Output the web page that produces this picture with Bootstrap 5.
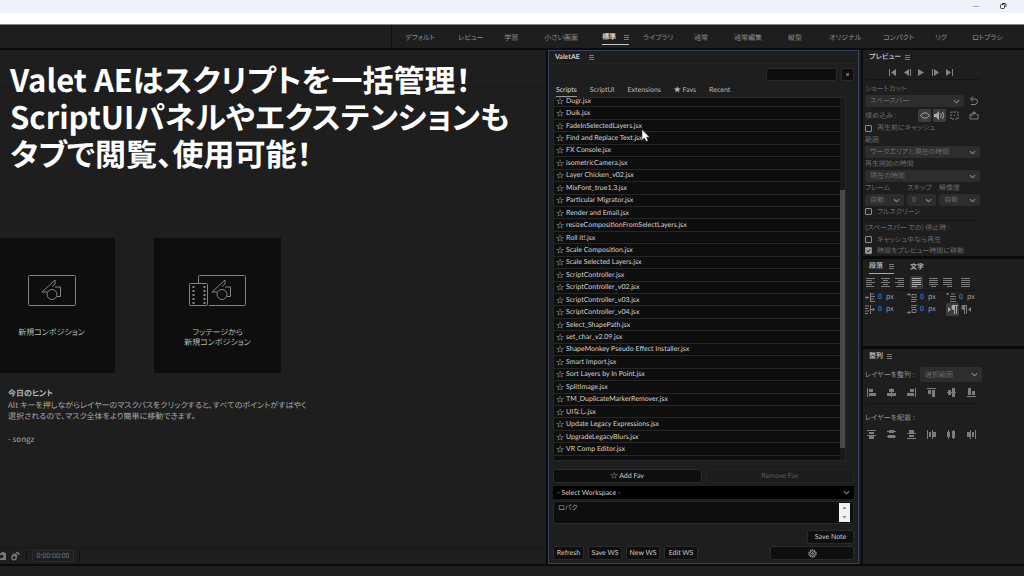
<!DOCTYPE html>
<html lang="ja">
<head>
<meta charset="utf-8">
<meta name="viewport" content="width=device-width, initial-scale=1">
<title>Valet AE</title>
<link href="https://cdn.jsdelivr.net/npm/bootstrap@5.3.0/dist/css/bootstrap.min.css" rel="stylesheet">
<style>
:root{--panel:#1e1e1e;--well:#0e0e0e;--edge:#0b0b0b;--dim:#6c6c6c;--soft:#a4a4a4}
body{font-family:"Noto Sans CJK JP",sans-serif;font-size:7px;line-height:12px;font-feature-settings:"palt","kern";text-rendering:geometricPrecision;background:var(--panel);color:var(--soft);overflow-x:hidden}
button,input,select,textarea{font-feature-settings:inherit;text-rendering:inherit}
svg{display:block;flex:none}
.titlebar{height:13px;background:#edf2fb}
.menubar{height:12px;background:#fff;border-bottom:1px solid #858585}
.ws-row{height:25px;border-bottom:2px solid var(--edge)}
.ws-lead{width:38.3%;border-right:1px solid #101010}
.ws-tabs{display:grid;grid-template-columns:53fr 46fr 40fr 58fr 41fr 51fr 40fr 54fr 41fr 54fr 52fr 37fr 52fr;padding:2px 0 0 13px}
.ws-tabs a{color:#8e8e8e;text-decoration:none;white-space:nowrap}
.ws-tabs .on{color:#d8d8d8;font-weight:700}
.ws-tabs .on span{display:inline-flex;width:27px;border-bottom:1px solid #c4c4c4;justify-content:space-between;align-items:center;height:15px}
.burger{width:5px;height:5px;border-top:1px solid #777;border-bottom:1px solid #777;position:relative;flex:none}
.burger::after{content:"";position:absolute;left:0;right:0;top:1px;height:1px;background:#777}
.viewer{border-right:2px solid var(--edge)}
.viewer-head{height:37px;border-bottom:1px solid #191919}
.starters{padding-top:151px;gap:39px}
.starter{width:127px;height:135px;background:var(--well);border:0;color:#b8b8b8;font-size:8px;line-height:10px;flex:none;padding:37px 0 0}
.starter:first-child{margin-left:-12px}
.starter svg{margin:0 auto 22px}
.tip{padding:15px 8px 0;font-size:8px;line-height:11px;color:#a6a6a6}
.tip h2{font-size:8px;line-height:12px;margin:0;font-weight:700;color:#b8b8b8}
.viewer-foot{height:17px;border-top:1px solid #181818;color:#777;gap:5px}
.timecode{width:42px;height:12px;border:1px solid #2c2c2c;border-radius:2px;line-height:10px;text-align:center}
.tick{width:1px;height:10px;background:#0e0e0e}
.caption{position:absolute;left:10px;top:60px;font-size:31px;line-height:37px;font-weight:700;color:#fff;margin:0;white-space:nowrap;z-index:3}
.valet{width:311px;border:1px solid #34405c;flex:none;color:#d2d2d2;font-family:Lato,"Noto Sans CJK JP",sans-serif}
.valet-head{height:13px;border-bottom:1px solid #242424;padding:0 6px;gap:9px}
.find{height:13px;background:var(--well);border:1px solid #292929;border-radius:2px;width:71px;color:#ccc;padding:0 3px}
.dark{background:#0f0f0f;border:1px solid #2a2a2a;border-radius:2px;color:#c8c8c8;padding:0;height:14px;line-height:12px}
.dark.off{background:#1d1d1d;border-color:#252525;color:#5c5c5c}
.find + .dark{width:13px;height:13px;line-height:10px}
.script-tabs{gap:13px;padding:3px 7px 0}
.script-tabs a{color:#b8b8b8;text-decoration:none;height:13px;border-bottom:1px solid transparent}
.script-tabs .on{color:#ddd;border-color:#999}
.script-box{height:364px;margin:0 12px 0 4px;border:1px solid #272727;overflow:hidden;display:flex}
.script-list{height:373px;margin:-3px 0 0;padding:0;display:flex;flex-direction:column;flex:1 1 auto;list-style:none;background:var(--well)}
.script-list li{flex:1 1 0;min-height:0;display:flex;align-items:center;padding-left:2px;gap:3px;border-bottom:1px solid #262626;line-height:10px}
.script-list i{font-style:normal;width:7px;font-size:8px}
.script-bar{width:5px;background:#191919}
.script-bar div{height:258px;margin-top:92px;background:#484848}
.pick{appearance:none;background:#2d2d2d url("data:image/svg+xml,%3Csvg xmlns='http://www.w3.org/2000/svg' viewBox='0 0 8 5'%3E%3Cpath d='M1 1l3 3 3-3' fill='none' stroke='%23858585' stroke-width='1.3'/%3E%3C/svg%3E") no-repeat right 4px center/7px 5px;border:0;border-radius:2px;color:var(--dim);height:12px;line-height:12px;padding:0 13px 0 5px;width:100%;display:block}
.pick.ws{background-color:#000;color:#d2d2d2;padding-left:4px;border-radius:0;height:13px;margin-top:3px}
.note-wrap{padding-top:2px}
.note{height:23px;background:var(--well);border:1px solid #292929;border-radius:2px;color:#999;resize:none;width:100%;padding:0 4px;display:block;overflow:hidden;line-height:12px}
.spin{position:absolute;right:4px;top:4px;width:11px;height:19px;background:#f1f1f1}
.save-row{padding-top:6px}
.foot-row{padding-top:2px}
.w-note{width:47px}.w-sm{width:31px}.w-md{width:34px}.w-gear{width:84px}
.side{width:163px;border-left:2px solid var(--edge);flex:none;color:var(--dim);margin-left:2px}
.side section{padding:0 2px;border-bottom:3px solid var(--edge)}
.side h2{font-size:7px;line-height:14px;margin:0;color:#b2b2b2;font-weight:700}
.transport{margin:3px 0 0}
.slim{max-width:115px}
.rule{border-top:1px solid #151515;height:1px;margin-bottom:3px}
.rule.mid{margin:3px 0 2px}
.rule.bare{margin:0}
.embed{gap:2px;margin-top:2px}
.chk{gap:5px;height:11px;white-space:nowrap}
.chk.first{height:12px}
.chk input{appearance:none;width:7px;height:7px;border:1px solid #8c8c8c;margin:0;border-radius:1px;flex:none}
.chk input:checked{background:#a0a0a0 url("data:image/svg+xml,%3Csvg xmlns='http://www.w3.org/2000/svg' viewBox='0 0 7 7'%3E%3Cpath d='M1 3.5l2 2 3-4' fill='none' stroke='%23111' stroke-width='1.3'/%3E%3C/svg%3E")}
.lab{line-height:12px;height:12px;white-space:nowrap;display:block}
.lab.tight{line-height:11px;height:11px}
.tool{border:0;background:none;padding:0;width:13px;height:13px;display:flex;align-items:center;justify-content:center;border-radius:2px;color:#7c7c7c}
.tool.on{background:#3d3d3d;color:#aaa}
.trip{display:grid;grid-template-columns:39px 29px 41px;gap:0 3px}
.para{height:90px}
.para-on{width:25px;border-bottom:1px solid #aaa}
.para-row{height:16px;max-width:105px}
.indent{display:grid;grid-template-columns:42px 39px 34px;color:#a0a0a0}
.indent label{display:flex;align-items:center;gap:3px;height:12px}
.indent input{width:5px;border:0;padding:0;background:none;color:#3f8fe8;height:10px}
.align-row{color:#999}
.align-row label{width:55px}
.align-row .pick{width:62px;height:15px}
.six{display:grid;grid-template-columns:repeat(6,20px);padding-top:4px}
.bottom{height:12px;border-top:2px solid var(--edge)}
.pointer{left:641px;top:129px}
</style>
</head>
<body>
<svg width="0" height="0" class="position-absolute" aria-hidden="true">
<defs>
<g id="shapes" fill="none" stroke="#858585" stroke-width="1"><path d="M10 6.500L13 4V0L0 12H5"/><path d="M13 7H18.500V16.500H15"/><circle cx="10" cy="14.500" r="5"/></g>
<g id="al-left" fill="currentColor"><path d="M0 0h1v9H0zM2 1h4v3H2zM2 5h7v3H2z"/></g>
<g id="al-mid" fill="currentColor"><path d="M4 0h1v9H4zM2 1h5v3H2zM0 5h9v3H0z"/></g>
<g id="di-top" fill="currentColor"><path d="M0 0h9v1H0zM2 2h5v2H2zM0 5h9v1H0zM2 6h5v3H2z"/></g>
<g id="di-mid" fill="currentColor"><path d="M2 0h5v3H2zM0 1h9v1H0zM1 5h7v3H1zM0 6h9v1H0z"/></g>
</defs>
</svg>
<div class="d-flex flex-column min-vh-100 position-relative">
  <header>
    <div class="titlebar d-flex justify-content-end align-items-center">
      <svg width="52" height="13" viewBox="0 0 52 13" fill="none"><path d="M1 6.500H7" stroke="#aaa"/><rect x="28.500" y="4.500" width="4" height="4" rx="1" stroke="#333"/><path d="M30 3.500H33Q34 3.500 34 4.500V7" stroke="#333"/></svg>
    </div>
    <div class="menubar"></div>
    <div class="ws-row d-flex">
      <div class="ws-lead flex-shrink-0"></div>
      <nav class="ws-tabs flex-fill align-items-center">
        <a href="#">デフォルト</a><a href="#">レビュー</a><a href="#">学習</a><a href="#">小さい画面</a><a href="#" class="on"><span>標準<b class="burger"></b></span></a><a href="#">ライブラリ</a><a href="#">通常</a><a href="#">通常編集</a><a href="#">縦型</a><a href="#">オリジナル</a><a href="#">コンパクト</a><a href="#">リグ</a><a href="#">ロトブラシ</a>
      </nav>
    </div>
  </header>

  <h1 class="caption">Valet AEはスクリプトを一括管理！<br>ScriptUIパネルやエクステンションも<br>タブで閲覧、使用可能！</h1>
  <svg class="pointer position-absolute z-3" width="9" height="14" viewBox="0 0 9 14"><path d="M1 .5V11L3.500 9 5.200 12.500 7 11.600 5.500 8.200H8.500Z" fill="#fff" stroke="#222" stroke-width=".5"/></svg>

  <main class="d-flex flex-fill">
    <div class="viewer d-flex flex-column flex-fill overflow-hidden">
      <div class="viewer-head"></div>
      <div class="starters d-flex">
        <button class="starter d-flex flex-column align-items-center justify-content-start">
          <svg width="48" height="31" viewBox="0 0 48 31"><rect x=".5" y=".5" width="47" height="30" rx="1" fill="none" stroke="#858585"/><use href="#shapes" x="14" y="5"/></svg>
          <span>新規コンポジション</span>
        </button>
        <button class="starter d-flex flex-column align-items-center justify-content-start">
          <svg width="57" height="31" viewBox="0 0 57 31" fill="none" stroke="#858585"><path d="M9.500 8V1.500Q9.500.5 10.500.5H55.500Q56.500.5 56.500 1.500V29.500Q56.500 30.500 55.500 30.500H20"/><rect x=".5" y="8.500" width="18" height="22" rx="1"/><path d="M4.500 11V29M15.500 11V29" stroke-width="2" stroke-dasharray="2 2"/><use href="#shapes" x="23" y="5"/></svg>
          <span>フッテージから<br>新規コンポジション</span>
        </button>
      </div>
      <div class="tip">
        <h2>今日のヒント</h2>
        <p class="mb-0">Alt キーを押しながらレイヤーのマスクパスをクリックすると、すべてのポイントがすばやく<br>選択されるので、マスク全体をより簡単に移動できます。</p>
        <p class="mb-0 pt-2 mt-1">- songz</p>
      </div>
      <div class="viewer-foot d-flex align-items-center mt-auto">
        <svg width="21" height="10" viewBox="0 0 21 10"><path d="M0 2H1L2 1H4L5 2H6V9H0Z" fill="#777"/><circle cx="1.500" cy="5.500" r="1.800" fill="#1e1e1e"/><g fill="none" stroke="#777" stroke-width="1.400"><circle cx="14" cy="6.500" r="2.200"/><path d="M13 3.500Q16 2.500 17 5.500M16 1.500Q19 1.500 19 4"/></g></svg>
        <span class="tick"></span><span class="timecode">0:00:00:00</span><span class="tick"></span>
      </div>
    </div>

    <div class="valet">
      <div class="valet-head d-flex align-items-center"><strong>ValetAE</strong><b class="burger"></b></div>
      <div class="d-flex justify-content-end gap-1 pt-1 pe-1">
        <input class="find" aria-label="Search"><button class="dark">×</button>
      </div>
      <nav class="script-tabs d-flex"><a href="#" class="on">Scripts</a><a href="#">ScriptUI</a><a href="#">Extensions</a><a href="#">★ Favs</a><a href="#">Recent</a></nav>
      <div class="script-box">
        <ul class="script-list">
          <li><i>☆</i>Dugr.jsx</li><li><i>☆</i>Duik.jsx</li><li><i>☆</i>FadeInSelectedLayers.jsx</li><li><i>☆</i>Find and Replace Text.jsx</li><li><i>☆</i>FX Console.jsx</li><li><i>☆</i>isometricCamera.jsx</li><li><i>☆</i>Layer Chicken_v02.jsx</li><li><i>☆</i>MixFont_true1.3.jsx</li><li><i>☆</i>Particular Migrator.jsx</li><li><i>☆</i>Render and Email.jsx</li><li><i>☆</i>resizeCompositionFromSelectLayers.jsx</li><li><i>☆</i>Roll it!.jsx</li><li><i>☆</i>Scale Composition.jsx</li><li><i>☆</i>Scale Selected Layers.jsx</li><li><i>☆</i>ScriptController.jsx</li><li><i>☆</i>ScriptController_v02.jsx</li><li><i>☆</i>ScriptController_v03.jsx</li><li><i>☆</i>ScriptController_v04.jsx</li><li><i>☆</i>Select_ShapePath.jsx</li><li><i>☆</i>set_char_v2.09.jsx</li><li><i>☆</i>ShapeMonkey Pseudo Effect Installer.jsx</li><li><i>☆</i>Smart Import.jsx</li><li><i>☆</i>Sort Layers by In Point.jsx</li><li><i>☆</i>SplitImage.jsx</li><li><i>☆</i>TM_DuplicateMarkerRemover.jsx</li><li><i>☆</i>UIなし.jsx</li><li><i>☆</i>Update Legacy Expressions.jsx</li><li><i>☆</i>UpgradeLegacyBlurs.jsx</li><li><i>☆</i>VR Comp Editor.jsx</li><li></li>
        </ul>
        <div class="script-bar"><div></div></div>
      </div>
      <div class="px-1 pt-2">
        <div class="d-flex gap-1"><button class="dark flex-fill w-50">☆ Add Fav</button><button class="dark off flex-fill w-50" disabled>Remove Fav</button></div>
        <select class="pick ws" aria-label="Workspace"><option>- Select Workspace -</option></select>
        <div class="note-wrap position-relative">
          <textarea class="note" aria-label="Note">ロパク</textarea>
          <svg class="spin" viewBox="0 0 11 19"><path d="M3.500 6L5.500 3.500 7.500 6ZM3.500 13L5.500 15.500 7.500 13Z" fill="#888"/></svg>
        </div>
        <div class="save-row d-flex justify-content-end"><button class="dark w-note">Save Note</button></div>
        <div class="foot-row d-flex gap-1">
          <button class="dark w-sm">Refresh</button><button class="dark w-md">Save WS</button><button class="dark w-md">New WS</button><button class="dark w-md">Edit WS</button>
          <button class="dark w-gear ms-auto d-flex align-items-center justify-content-center" aria-label="Settings"><svg width="9" height="9" viewBox="0 0 9 9" fill="none" stroke="#b8b8b8"><circle cx="4.500" cy="4.500" r="3.700" stroke-dasharray="1.500 .8"/><circle cx="4.500" cy="4.500" r="2.700" stroke-width=".8"/><circle cx="4.500" cy="4.500" r=".8"/></svg></button>
        </div>
      </div>
    </div>

    <aside class="side d-flex flex-column">
      <section>
        <div class="d-flex align-items-center ps-1"><h2>プレビュー</h2><b class="burger ms-1"></b></div>
        <svg class="transport" width="115" height="12" viewBox="0 0 115 12" fill="#858585"><path d="M24 2h1v7h-1zM31 2v7L26 5.500zM44 2v7L39 5.500zM45 2h1v7h-1zM53 2v7L59 5.500zM67 2h1v7h-1zM69 2v7L74 5.500zM81 2v7L86 5.500zM87 2h1v7h-1z"/></svg>
        <div class="rule slim"></div>
        <label class="lab" for="sc">ショートカット</label>
        <div class="d-flex slim align-items-center gap-1"><select class="pick" id="sc"><option>スペースバー</option></select><svg width="12" height="10" viewBox="0 0 12 10" fill="none" stroke="#858585"><path d="M5 .5L2.500 3 5 5.500M3 3H7Q9.500 3 9.500 5.500T7 8.500H3"/></svg></div>
        <div class="embed d-flex slim align-items-center"><span class="me-auto">埋め込み :</span>
          <button class="tool on" aria-label="Video"><svg width="10" height="7" viewBox="0 0 10 7" fill="none" stroke="currentColor"><path d="M.5 3.500Q5-2 9.500 3.500 5 9 .5 3.500Z"/></svg></button>
          <button class="tool on" aria-label="Audio"><svg width="11" height="9" viewBox="0 0 11 9"><path d="M0 3H2L5 0V9L2 6H0Z" fill="currentColor"/><path d="M6.500 2.500Q8 4.500 6.500 6.500M8.500 1Q11 4.500 8.500 8" fill="none" stroke="currentColor"/></svg></button>
          <button class="tool" aria-label="Overlay"><svg width="9" height="9" viewBox="0 0 9 9" fill="none" stroke="currentColor"><rect x="1" y="1" width="7" height="7" stroke-dasharray="2 1"/><path d="M4 4.500H5"/></svg></button>
          <button class="tool ms-1" aria-label="Loop"><svg width="10" height="9" viewBox="0 0 10 9" fill="none" stroke="currentColor"><path d="M2.500 3.500H1V8H9V3.500H7.500M3 5.500V2H5"/><path d="M4.500 0L7.500 2 4.500 4Z" fill="currentColor" stroke="none"/></svg></button>
        </div>
        <label class="chk first d-flex align-items-center"><input type="checkbox">再生前にキャッシュ</label>
        <label class="lab" for="rg">範囲</label>
        <div class="slim"><select class="pick" id="rg"><option>ワークエリアと現在の時間</option></select></div>
        <label class="lab" for="st">再生開始の時間</label>
        <div class="slim"><select class="pick" id="st"><option>現在の時間</option></select></div>
        <div class="trip"><label class="lab" for="fr">フレーム</label><label class="lab" for="sk">スキップ</label><label class="lab" for="rs">解像度</label>
          <select class="pick" id="fr"><option>自動</option></select><select class="pick" id="sk"><option>0</option></select><select class="pick" id="rs"><option>自動</option></select></div>
        <label class="chk d-flex align-items-center"><input type="checkbox">フルスクリーン</label>
        <div class="rule mid slim"></div>
        <span class="lab tight">(スペースバー での) 停止時 :</span>
        <label class="chk d-flex align-items-center"><input type="checkbox">キャッシュ中なら再生</label>
        <label class="chk d-flex align-items-center"><input type="checkbox" checked>時間をプレビュー時間に移動</label>
      </section>
      <section class="para">
        <div class="d-flex align-items-center ps-1"><h2 class="para-on d-flex align-items-center justify-content-between">段落<b class="burger"></b></h2><h2 class="ps-3">文字</h2></div>
        <div class="para-row d-flex align-items-center justify-content-between">
          <svg width="39" height="9" viewBox="0 0 39 9" stroke="#7c7c7c"><path d="M1 .5h9M1 2.500h6M1 4.500h9M1 6.500h6M1 8.500h8M16 .5h9M18 2.500h5M16 4.500h9M18 6.500h5M16 8.500h9M30 .5h9M33 2.500h6M30 4.500h9M33 6.500h6M31 8.500h8"/></svg>
          <button class="tool on" aria-label="Justify left"><svg width="9" height="9" viewBox="0 0 9 9" stroke="currentColor"><path d="M0 .5h9M0 2.500h9M0 4.500h9M0 6.500h9M0 8.500h5"/></svg></button>
          <svg width="41" height="9" viewBox="0 0 41 9" stroke="#7c7c7c"><path d="M0 .5h9M0 2.500h9M0 4.500h9M0 6.500h9M2 8.500h5M14 .5h9M14 2.500h9M14 4.500h9M14 6.500h9M18 8.500h5M32 .5h9M32 2.500h9M32 4.500h9M32 6.500h9M32 8.500h9"/></svg>
        </div>
        <div class="rule bare slim"></div>
        <div class="indent slim">
          <label><svg width="10" height="9" viewBox="0 0 10 9" fill="none" stroke="#7c7c7c"><path d="M0 4.500H4M2 3V6M5.500 0V9M6 1H9M6 3.500H10M6 6H9M6 8.500H10"/></svg><input value="0" aria-label="Indent left">px</label>
          <label><svg width="10" height="9" viewBox="0 0 10 9" fill="none" stroke="#7c7c7c"><path d="M0 1.500H4M2 0V3M5 1.500H9V4.500H5ZM4 6.500H10M4 8.500H9"/></svg><input value="0" aria-label="Space before">px</label>
          <label><svg width="10" height="9" viewBox="0 0 10 9" fill="none" stroke="#7c7c7c"><path d="M0 1H3M2 0V2M5 1H9M4 3.500H10M4 6H10M4 8.500H10"/></svg><input value="0" aria-label="First line">px</label>
          <label><svg width="10" height="9" viewBox="0 0 10 9" fill="none" stroke="#7c7c7c"><path d="M0 1H4M0 3.500H3M0 6H4M0 8.500H3M5.500 0V9M6 4.500H10M8 3V6"/></svg><input value="0" aria-label="Indent right">px</label>
          <label><svg width="10" height="9" viewBox="0 0 10 9" fill="none" stroke="#7c7c7c"><path d="M4 .5H10M4 2.500H9M5 4.500H9V7.500H5ZM0 7.500H4M2 6V9"/></svg><input value="0" aria-label="Space after">px</label>
          <div class="d-flex"><button class="tool on" aria-label="Left to right"><svg width="10" height="9" viewBox="0 0 10 9" fill="currentColor"><path d="M0 2L3 4.500 0 7ZM6 0H10V1H9V9H8V1H7V9H6V5Q3 5 3.500 2T6 0Z"/></svg></button><button class="tool" aria-label="Right to left"><svg width="10" height="9" viewBox="0 0 10 9" fill="currentColor"><path d="M10 2L7 4.500 10 7ZM3 0H6V9H5V1H4V9H3V5Q0 5 .5 2T3 0Z"/></svg></button></div>
        </div>
      </section>
      <section class="flex-fill border-bottom-0">
        <div class="d-flex align-items-center ps-1"><h2>整列</h2><b class="burger ms-1"></b></div>
        <div class="align-row d-flex align-items-center mt-1"><label for="al">レイヤーを整列 :</label><select class="pick" id="al"><option>選択範囲</option></select></div>
        <div class="six">
          <button class="tool" aria-label="Left"><svg width="9" height="9"><use href="#al-left"/></svg></button>
          <button class="tool" aria-label="Center"><svg width="9" height="9"><use href="#al-mid"/></svg></button>
          <button class="tool" aria-label="Right"><svg width="9" height="9"><use href="#al-left" transform="matrix(-1 0 0 1 9 0)"/></svg></button>
          <button class="tool" aria-label="Top"><svg width="9" height="9"><use href="#al-left" transform="matrix(0 1 1 0 0 0)"/></svg></button>
          <button class="tool" aria-label="Middle"><svg width="9" height="9"><use href="#al-mid" transform="matrix(0 1 1 0 0 0)"/></svg></button>
          <button class="tool" aria-label="Bottom"><svg width="9" height="9"><use href="#al-left" transform="matrix(0 -1 -1 0 9 9)"/></svg></button>
        </div>
        <div class="rule bare slim mt-1"></div>
        <div class="align-row pt-1 mt-1">レイヤーを配置 :</div>
        <div class="six">
          <button class="tool" aria-label="Distribute top"><svg width="9" height="9"><use href="#di-top"/></svg></button>
          <button class="tool" aria-label="Distribute middle"><svg width="9" height="9"><use href="#di-mid"/></svg></button>
          <button class="tool" aria-label="Distribute bottom"><svg width="9" height="9"><use href="#di-top" transform="matrix(1 0 0 -1 0 9)"/></svg></button>
          <button class="tool" aria-label="Distribute left"><svg width="9" height="9"><use href="#di-top" transform="matrix(0 1 1 0 0 0)"/></svg></button>
          <button class="tool" aria-label="Distribute center"><svg width="9" height="9"><use href="#di-mid" transform="matrix(0 1 1 0 0 0)"/></svg></button>
          <button class="tool" aria-label="Distribute right"><svg width="9" height="9"><use href="#di-top" transform="matrix(0 1 -1 0 9 0)"/></svg></button>
        </div>
      </section>
    </aside>
  </main>
  <footer class="bottom"></footer>
</div>
<script src="https://cdn.jsdelivr.net/npm/bootstrap@5.3.0/dist/js/bootstrap.bundle.min.js"></script>
</body>
</html>
